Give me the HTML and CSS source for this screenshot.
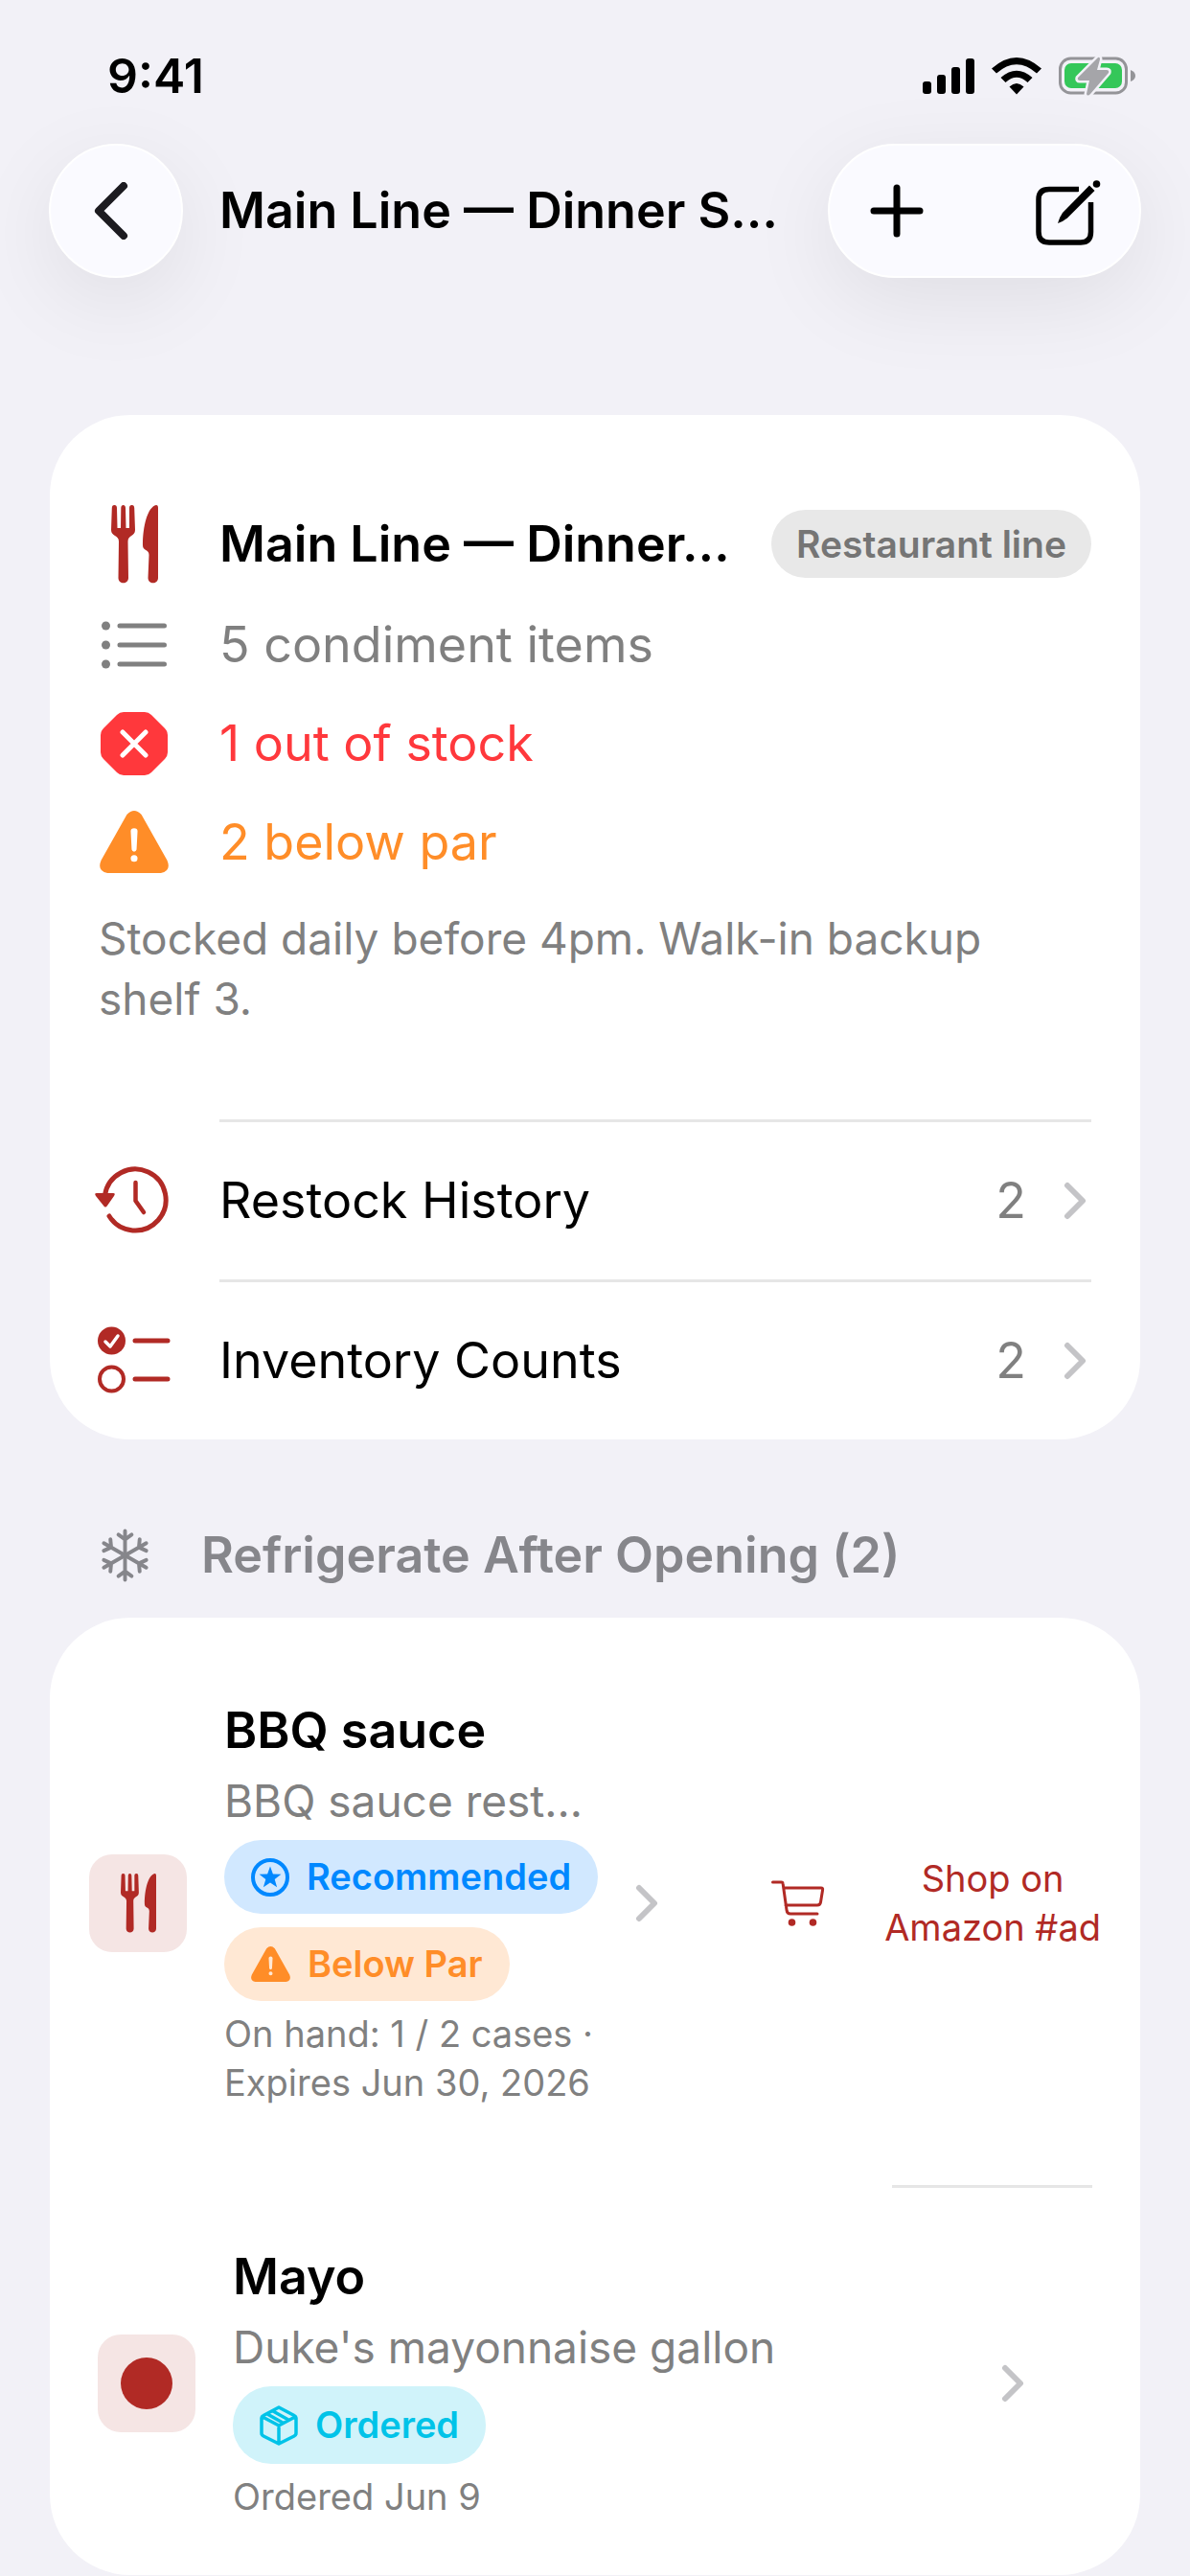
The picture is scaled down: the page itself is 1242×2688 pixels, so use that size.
FILE: index.html
```html
<!DOCTYPE html>
<html lang="en">
<head>
    <meta charset="UTF-8">
    <meta name="viewport" content="width=device-width, initial-scale=1.0">
    <title>Main Line</title>
    <link rel="stylesheet" href="styles.css">
</head>
<body>
    <!-- shared icons -->
    <svg class="defs" width="0" height="0" aria-hidden="true">
        <symbol id="fork-knife" viewBox="0 0 49 82">
            <path d="M3.5 0C5 0 6 1 6 3L6.5 24H10L10.3 3C10.3-1 15-1 15 3L15.5 24H19V3C19 1 20 0 21.5 0C23.5 0 24 1 24.2 3L25 26C25 33 17.5 31 17.5 38L18 76C18 83 7.5 83 7.5 76L8 38C8 31 0 33 0 26L.8 3C1 1 1.5 0 3.5 0Z"/>
            <path d="M47 0C48.500 0 49 1 49 3V76C49 83 38.500 83 38.500 76L39.500 52C39.500 46 33 48 33 42C33 22 38 2 47 0Z"/>
        </symbol>
        <symbol id="warning" viewBox="0 0 71 64">
            <path fill-rule="evenodd" d="M28 4Q35.500-4 43 4L69.500 51Q74 62 63 64H8Q-3 62 1.500 51ZM35.500 18Q32 18 32 21L33 40Q33.500 42 35.500 42Q37.500 42 38 40L39 21Q39 18 35.500 18ZM35.500 45.500A3.500 3.500 0 1 0 35.500 52.500A3.500 3.500 0 1 0 35.500 45.500Z"/>
        </symbol>
        <symbol id="chevron" viewBox="0 0 24 40">
            <path d="M4 4L20 20L4 36" fill="none" stroke="currentColor" stroke-width="6" stroke-linecap="round" stroke-linejoin="round"/>
        </symbol>
    </svg>

    <header class="top">
        <div class="status-bar">
            <span class="time">9:41</span>
            <div class="status-icons">
                <svg width="54" height="37" viewBox="0 0 54 37">
                    <rect x="0" y="24" width="9" height="13" rx="3"/>
                    <rect x="15" y="17" width="9" height="20" rx="3"/>
                    <rect x="30" y="9" width="9" height="28" rx="3"/>
                    <rect x="45" y="0" width="9" height="37" rx="3"/>
                </svg>
                <svg width="52" height="39" viewBox="0 0 52 39">
                    <path d="M0 11.500Q26-11.500 52 11.500L47 16.500Q26-2 5 16.500Z"/>
                    <path d="M9.500 21Q26 6.500 42.500 21L37.500 26Q26 15.500 14.500 26Z"/>
                    <path d="M18.500 30.500Q26 23.500 33.500 30.500L26 38.500Z"/>
                </svg>
                <svg width="80" height="42" viewBox="0 0 80 42">
                    <rect x="1.500" y="3" width="69" height="36" rx="11" fill="none" stroke="#949498" stroke-width="3"/>
                    <path d="M75 15Q80 17 80 21T75 27Z" fill="#949498"/>
                    <rect x="6" y="8" width="60" height="26" rx="7" fill="#34c759"/>
                    <path d="M41 2L20 23Q19 26 22 26H32L29 40Q30 43 33 40L52 18Q53 15 50 15H40L43 4Q43 1 41 2Z" fill="#a5a5a9" stroke="#f2f1f7" stroke-width="5" paint-order="stroke"/>
                </svg>
            </div>
        </div>
        <nav class="nav-bar">
            <button class="glass back" aria-label="Back">
                <svg class="stroked" width="36" height="60" viewBox="0 0 36 60" stroke-width="8"><path d="M31 4L5 30L31 56"/></svg>
            </button>
            <h1>Main Line — Dinner S…</h1>
            <div class="glass actions">
                <button aria-label="Add">
                    <svg class="stroked" width="56" height="56" viewBox="0 0 56 56" stroke-width="7"><path d="M28 4V52M4 28H52"/></svg>
                </button>
                <button aria-label="Edit">
                    <svg width="68" height="72" viewBox="0 -4 68 72">
                        <path d="M45 9.500H14Q3 9.500 3 20V54Q3 65 14 65H47Q57.500 65 57.500 54V23" fill="none" stroke="#000" stroke-width="5.500"/>
                        <path d="M56 5.500L61.500 11L33 39.500Q28 43.500 23 45Q24.500 39 28 34Z" stroke="#fafaff" stroke-width="7" paint-order="stroke"/>
                        <circle cx="63.500" cy="4" r="3.800"/>
                    </svg>
                </button>
            </div>
        </nav>
    </header>

    <main>
        <section class="card overview">
            <div class="summary">
                <div class="line heading">
                    <svg class="red" width="49" height="82"><use href="#fork-knife"/></svg>
                    <h2>Main Line — Dinner…</h2>
                    <span class="tag">Restaurant line</span>
                </div>
                <div class="line gray">
                    <svg width="68" height="52" viewBox="0 0 68 52">
                        <circle cx="4.500" cy="6" r="4.500"/><circle cx="4.500" cy="26" r="4.500"/><circle cx="4.500" cy="46" r="4.500"/>
                        <path d="M19 6H65.500M19 26H65.500M19 46H65.500" stroke="currentColor" stroke-width="5" stroke-linecap="round"/>
                    </svg>
                    <span>5 condiment items</span>
                </div>
                <div class="line out">
                    <svg width="70" height="66" viewBox="0 0 70 66">
                        <path d="M24 0H46Q50 0 53 3L67 17Q70 20 70 24V42Q70 46 67 49L53 63Q50 66 46 66H24Q20 66 17 63L3 49Q0 46 0 42V24Q0 20 3 17L17 3Q20 0 24 0Z"/>
                        <path d="M23 21L47 45M47 21L23 45" stroke="#fff" stroke-width="5" stroke-linecap="round"/>
                    </svg>
                    <span>1 out of stock</span>
                </div>
                <div class="line below">
                    <svg width="72" height="65"><use href="#warning"/></svg>
                    <span>2 below par</span>
                </div>
                <p class="note">Stocked daily before 4pm. Walk-in backup shelf 3.</p>
            </div>
            <a class="link-row" href="#restock">
                <svg class="red" width="82" height="70" viewBox="2 0 82 70">
                    <path d="M12.500 30A32 32 0 1 1 17 52" fill="none" stroke="currentColor" stroke-width="5" stroke-linecap="round"/>
                    <path d="M4 28H21Q24 28 22 31L15 41Q13 44 11 41L3 31Q1 28 4 28Z"/>
                    <path d="M44.500 17V36L53 48" fill="none" stroke="currentColor" stroke-width="4.500" stroke-linecap="round" stroke-linejoin="round"/>
                </svg>
                <span class="row-body">
                    <span>Restock History</span>
                    <span class="count">2</span>
                    <svg class="chevron" width="24" height="40"><use href="#chevron"/></svg>
                </span>
            </a>
            <a class="link-row" href="#counts">
                <svg class="red" width="76" height="70" viewBox="0 0 76 70">
                    <circle cx="14.500" cy="15" r="14.500"/>
                    <path d="M8 16L13 21L21 10" fill="none" stroke="#fff" stroke-width="3.500" stroke-linecap="round" stroke-linejoin="round"/>
                    <circle cx="14.500" cy="55" r="12.500" fill="none" stroke="currentColor" stroke-width="4"/>
                    <path d="M39 15H73M39 55H73" stroke="currentColor" stroke-width="5" stroke-linecap="round"/>
                </svg>
                <span class="row-body">
                    <span>Inventory Counts</span>
                    <span class="count">2</span>
                    <svg class="chevron" width="24" height="40"><use href="#chevron"/></svg>
                </span>
            </a>
        </section>

        <h2 class="section-title">
            <svg class="stroked" width="55" height="56" viewBox="-28 -28 56 56" stroke-width="4">
                <g id="arm"><path d="M0 0V-26M-7-22L0-17L7-22"/></g>
                <use href="#arm" transform="rotate(60)"/>
                <use href="#arm" transform="rotate(120)"/>
                <use href="#arm" transform="rotate(180)"/>
                <use href="#arm" transform="rotate(240)"/>
                <use href="#arm" transform="rotate(300)"/>
            </svg>
            Refrigerate After Opening (2)
        </h2>

        <section class="card items">
            <article class="item with-shop">
                <a class="item-link" href="#bbq">
                    <span class="thumb"><svg width="37" height="62"><use href="#fork-knife"/></svg></span>
                    <span class="details">
                        <strong>BBQ sauce</strong>
                        <span class="product">BBQ sauce rest…</span>
                        <span class="pills">
                            <span class="pill recommended">
                                <svg width="40" height="40" viewBox="0 0 40 40">
                                    <circle cx="20" cy="20" r="18" fill="none" stroke="currentColor" stroke-width="4"/>
                                    <path d="M20 8.500L22.900 16.500L31.400 16.800L24.700 22L27.100 30.200L20 25.400L12.900 30.200L15.300 22L8.600 16.800L17.100 16.500Z"/>
                                </svg>
                                Recommended
                            </span>
                            <span class="pill below">
                                <svg width="41" height="37"><use href="#warning"/></svg>
                                Below Par
                            </span>
                        </span>
                        <small>On hand: 1 / 2 cases ·<br>Expires Jun 30, 2026</small>
                    </span>
                    <svg class="chevron" width="24" height="40"><use href="#chevron"/></svg>
                </a>
                <a class="shop" href="#shop">
                    <svg width="56" height="48" viewBox="0 0 56 48">
                        <path d="M1.500 2H10.500Q12 2 12.200 4L16 31Q16.500 35 20 35H48M13 8H52Q54 8 53.600 10L51.500 23Q51 26 48 26H15" fill="none" stroke="currentColor" stroke-width="3" stroke-linecap="round" stroke-linejoin="round"/>
                        <circle cx="21.500" cy="44" r="3.800"/><circle cx="43.500" cy="44" r="3.800"/>
                    </svg>
                    <span>Shop on<br>Amazon #ad</span>
                </a>
            </article>
            <article class="item">
                <a class="item-link" href="#mayo">
                    <span class="thumb"><svg width="54" height="54" viewBox="0 0 54 54"><circle cx="27" cy="27" r="27"/></svg></span>
                    <span class="details">
                        <strong>Mayo</strong>
                        <span class="product">Duke's mayonnaise gallon</span>
                        <span class="pills">
                            <span class="pill ordered">
                                <svg class="stroked" width="40" height="42" viewBox="0 0 40 42" stroke-width="3.500">
                                    <path d="M20 2L36 10.500Q38 11.500 38 13V29Q38 31 36 32L20 40L4 32Q2 31 2 29V13Q2 11.500 4 10.500ZM3 12L20 21L37 12M20 21V39M14 6L30 15M8 9L24 18"/>
                                </svg>
                                Ordered
                            </span>
                        </span>
                        <small>Ordered Jun 9</small>
                    </span>
                    <svg class="chevron" width="24" height="40"><use href="#chevron"/></svg>
                </a>
            </article>
        </section>
    </main>
</body>
</html>
```
FILE: styles.css
```css
* {
    box-sizing: border-box;
}

body {
    margin: 0;
    background-color: #f2f1f7;
    color: #000;
    font-family: Inter, 'Liberation Sans', sans-serif;
    font-size: 52px;
    line-height: 66px;
}

h1, h2, p {
    margin: 0;
    font-size: inherit;
    font-weight: 600;
}

a {
    color: inherit;
    text-decoration: none;
}

button {
    border: none;
    padding: 0;
    background: none;
    color: #000;
    display: flex;
    align-items: center;
    justify-content: center;
    cursor: pointer;
}

svg {
    fill: currentColor;
    flex-shrink: 0;
}

.stroked {
    fill: none;
    stroke: currentColor;
    stroke-linecap: round;
    stroke-linejoin: round;
}

.defs {
    display: none;
}

.red {
    color: #b12a25;
}

.gray {
    color: #808080;
}

.out {
    color: #ff383c;
}

.below {
    color: #ff8d28;
}

.chevron {
    color: #c4c4c7;
}

/* status bar and navigation */
.status-bar {
    display: flex;
    align-items: center;
    justify-content: space-between;
    padding: 46px 57px 38px 112px;
    font-weight: 600;
}

.time {
    font-size: 50px;
}

.status-icons {
    display: flex;
    align-items: center;
    gap: 18px;
}

.nav-bar {
    display: flex;
    align-items: center;
    padding: 0 51px;
}

.nav-bar h1 {
    flex: 1;
    padding-left: 38px;
    white-space: nowrap;
}

.glass {
    height: 140px;
    border: 2px solid #fff;
    border-radius: 70px;
    background-color: #fafaff;
    box-shadow: 0 24px 90px rgba(0, 0, 0, 0.08);
}

.back {
    width: 140px;
    padding-right: 10px;
    color: #1c1b20;
}

.actions {
    width: 327px;
    display: flex;
    align-items: center;
    justify-content: space-between;
    padding: 0 40px 0 42px;
}

/* cards */
main {
    padding: 143px 52px 0;
}

.card {
    background-color: #fff;
    border-radius: 84px;
}

.overview {
    padding-left: 51px;
}

.summary {
    display: flex;
    flex-direction: column;
    gap: 36px;
    padding: 99px 51px 94px 0;
}

.line {
    display: grid;
    grid-template-columns: 74px minmax(0, 1fr) auto;
    grid-template-rows: 67px;
    align-items: center;
    column-gap: 52px;
}

.line svg {
    justify-self: center;
}

.heading {
    grid-template-rows: 71px;
}

.heading h2,
.tag {
    white-space: nowrap;
}

/* the title may run into the gap before the tag */
.heading h2 {
    overflow: visible;
}

.tag {
    padding: 10px 26px;
    border-radius: 36px;
    background-color: #e8e8e8;
    color: #757575;
    font-size: 39px;
    font-weight: 600;
    line-height: 51px;
}

.note {
    color: #808080;
    font-size: 46px;
    font-weight: 400;
    line-height: 63px;
}

.link-row {
    display: grid;
    grid-template-columns: 74px 1fr;
    align-items: center;
    column-gap: 52px;
}

.link-row > svg {
    justify-self: center;
}

.row-body {
    display: flex;
    align-items: center;
    height: 167px;
    margin-right: 51px;
    padding-right: 5px;
    border-top: 3px solid #e6e6e6;
}

.count {
    margin-left: auto;
    margin-right: 39px;
    color: #808080;
}

.section-title {
    display: flex;
    align-items: center;
    gap: 52px;
    padding: 88px 51px 32px;
    color: #86868b;
}

/* items */
.item {
    display: flex;
    align-items: center;
    justify-content: space-between;
    padding: 60px 121px 56px 50px;
}

.with-shop {
    position: relative;
    padding: 85px 41px 84px 41px;
}

/* short divider below the shop link */
.with-shop::after {
    content: '';
    position: absolute;
    right: 50px;
    bottom: 0;
    width: 209px;
    height: 3px;
    background-color: #e6e6e6;
}

.item-link {
    display: flex;
    align-items: center;
    gap: 39px;
    flex: 1;
}

.item-link .chevron {
    margin-left: auto;
}

.with-shop .item-link {
    flex: none;
}

.thumb {
    display: flex;
    align-items: center;
    justify-content: center;
    width: 102px;
    height: 102px;
    border-radius: 24px;
    background-color: #f5e5e4;
    color: #b12a25;
}

.details,
.pills {
    display: flex;
    flex-direction: column;
    align-items: flex-start;
    gap: 9px;
}

.pills {
    gap: 14px;
}

.details strong {
    font-weight: 600;
}

.product {
    color: #808080;
    font-size: 46px;
    line-height: 63px;
}

.pill {
    display: flex;
    align-items: center;
    gap: 18px;
    padding: 13px 28px;
    border-radius: 40px;
    font-size: 38px;
    font-weight: 600;
    line-height: 51px;
}

.pill.recommended {
    background-color: #d1e8ff;
    color: #0088ff;
}

.pill.below {
    background-color: #ffe8d4;
}

.pill.ordered {
    padding: 15px 28px;
    background-color: #d0f3fa;
    color: #00c3e8;
}

.details small {
    color: #808080;
    font-size: 38px;
    line-height: 51px;
}

.shop {
    display: flex;
    align-items: center;
    gap: 62px;
    color: #b12a25;
    font-size: 38px;
    line-height: 51px;
    text-align: center;
}
```
